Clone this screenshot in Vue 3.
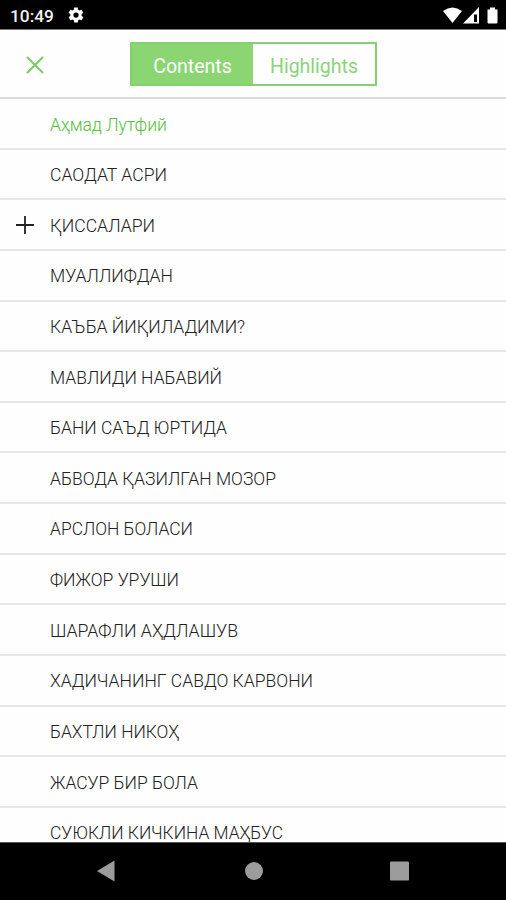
<script setup>
import { ref } from 'vue';

// current tab
const activeTab = ref('contents');

const tabs = [
  { value: 'contents', label: 'Contents' },
  { value: 'highlights', label: 'Highlights' }
];

// table of contents
const chapters = ref([
  { title: 'Аҳмад Лутфий', width: 117, current: true },
  { title: 'САОДАТ АСРИ', width: 117 },
  { title: 'ҚИССАЛАРИ', width: 105, expandable: true },
  { title: 'МУАЛЛИФДАН', width: 123 },
  { title: 'КАЪБА ЙИҚИЛАДИМИ?', width: 195 },
  { title: 'МАВЛИДИ НАБАВИЙ', width: 172 },
  { title: 'БАНИ САЪД ЮРТИДА', width: 177 },
  { title: 'АБВОДА ҚАЗИЛГАН МОЗОР', width: 226 },
  { title: 'АРСЛОН БОЛАСИ', width: 143 },
  { title: 'ФИЖОР УРУШИ', width: 129 },
  { title: 'ШАРАФЛИ АҲДЛАШУВ', width: 188 },
  { title: 'ХАДИЧАНИНГ САВДО КАРВОНИ', width: 263 },
  { title: 'БАХТЛИ НИКОҲ', width: 129 },
  { title: 'ЖАСУР БИР БОЛА', width: 148 },
  { title: 'СУЮКЛИ КИЧКИНА МАҲБУС', width: 233 }
]);
</script>

<template>
  <div class="screen">
    <div class="status-bar">
      <span class="clock">10:49</span>
      <svg class="gear" viewBox="0 0 24 24">
        <path fill-rule="evenodd" d="M19.4 13a7.8 7.8 0 0 0 0-2l2.1-1.6c.2-.2.3-.4.1-.7l-2-3.4c-.1-.2-.4-.3-.6-.2l-2.5 1a7.3 7.3 0 0 0-1.7-1l-.4-2.6c0-.3-.2-.5-.5-.5h-4c-.2 0-.4.2-.5.4l-.4 2.7c-.6.2-1.2.6-1.7 1l-2.4-1c-.2-.1-.5 0-.6.2l-2 3.4c-.1.3-.1.5.1.7L4.5 11a7.8 7.8 0 0 0 0 2l-2.1 1.6c-.2.2-.3.4-.1.7l2 3.4c.1.2.4.3.6.2l2.5-1c.5.4 1.1.7 1.7 1l.4 2.6c0 .3.2.5.5.5h4c.2 0 .4-.2.5-.5l.4-2.6c.6-.3 1.2-.6 1.7-1l2.5 1c.2.1.5 0 .6-.2l2-3.4c.1-.3.1-.5-.1-.7zM12 15.5a3.5 3.5 0 1 1 0-7 3.5 3.5 0 0 1 0 7z" />
      </svg>
      <svg class="signals" viewBox="0 0 56 20">
        <path d="M0 5Q9.5-2 19 5L9.5 17z" />
        <path fill-rule="evenodd" d="M20 17.5L36 1v16.5zM31 8.5v7.5h3v-7.5z" />
        <path d="M44.5 3.5h2.5v-2h5v2h2.5v13q0 1-1 1h-8q-1 0-1-1z" />
      </svg>
    </div>

    <div class="header">
      <svg class="close" viewBox="0 0 18 18">
        <path d="M1 1l16 16M17 1L1 17" />
      </svg>
      <div class="tabs">
        <button
          v-for="tab in tabs"
          :key="tab.value"
          class="tab"
          :class="[tab.value, { active: activeTab === tab.value }]"
          @click="activeTab = tab.value"
        >{{ tab.label }}</button>
      </div>
    </div>

    <div class="list">
      <div v-for="item in chapters" :key="item.title" class="row" :class="{ current: item.current }">
        <div class="expander">
          <svg v-if="item.expandable" class="plus" viewBox="0 0 18 18">
            <path d="M9 0v18M0 9h18" />
          </svg>
        </div>
        <svg class="title" height="30" :width="item.width + 4">
          <text x="0" y="21.5" :textLength="item.width" lengthAdjust="spacingAndGlyphs">{{ item.title }}</text>
        </svg>
      </div>
    </div>

    <div class="nav-bar">
      <svg viewBox="0 0 18 22"><path d="M17.5.5v21L0 11z" /></svg>
      <svg viewBox="0 0 18 22"><circle cx="9" cy="11" r="9" /></svg>
      <svg viewBox="0 0 20 22"><rect y="1.5" width="19" height="19" rx="1" /></svg>
    </div>
  </div>
</template>

<style>
body {
  margin: 0;
  overflow: hidden;
}
</style>

<style scoped>
.screen {
  display: flex;
  flex-direction: column;
  height: 900px;
  background-color: #fefefe;
  font-family: Roboto, "Noto Sans", sans-serif;
  overflow: hidden;
}

.status-bar {
  display: flex;
  align-items: center;
  flex: none;
  box-sizing: border-box;
  height: 30px;
  padding: 1px 8px 0 10px;
  background-color: #000;
  border-bottom: 1px solid #777;
  color: #f2f2f2;
}

.clock {
  width: 57px;
  padding-top: 2px;
  font-size: 17.3px;
  font-weight: 500;
  line-height: 30px;
}

.gear {
  width: 18px;
  height: 18px;
  fill: #fff;
}

.signals {
  width: 56px;
  height: 20px;
  margin: 1px -1px 0 auto;
  fill: #fff;
}

.header {
  display: flex;
  align-items: center;
  flex: none;
  box-sizing: border-box;
  height: 69px;
  padding-left: 26px;
  border-bottom: 2px solid #dcdcdc;
}

.close {
  width: 18px;
  height: 18px;
  margin-top: 2px;
  margin-right: 86px;
  stroke: #78cc65;
  stroke-width: 2;
}

.tabs {
  display: flex;
  box-sizing: border-box;
  width: 247px;
  height: 44px;
  margin-top: 1px;
  border: 2px solid #84d070;
}

.tab {
  padding: 4px 0 0;
  border: none;
  background: none;
  color: #8bd47a;
  font-family: inherit;
  font-size: 19.5px;
  cursor: pointer;
}

.tab.contents {
  width: 121px;
}

.tab.highlights {
  width: 122px;
}

.tab.active {
  background-color: #8bd573;
  color: #fff;
}

.list {
  flex: 1;
  min-height: 0;
  overflow: hidden;
}

.row {
  display: flex;
  align-items: center;
  box-sizing: border-box;
  height: 50.65px;
  border-bottom: 2px solid #e7e7e7;
}

.expander {
  display: flex;
  width: 34px;
  padding-left: 16px;
}

.plus {
  width: 18px;
  height: 18px;
  stroke: #222;
  stroke-width: 1.8;
}

.title {
  overflow: visible;
}

.title text {
  fill: #222;
  font-size: 17.5px;
  font-weight: 300;
}

.current .title {
  margin-top: 2px;
}

.current .title text {
  fill: #54c23a;
}

.nav-bar {
  display: flex;
  align-items: center;
  flex: none;
  box-sizing: border-box;
  height: 58px;
  padding: 0 0 2px 97px;
  gap: 130px;
  background-color: #000;
  border-top: 1px solid #555;
}

.nav-bar svg {
  width: 18px;
  height: 22px;
  fill: #9c9c9c;
}

.nav-bar svg:last-child {
  width: 20px;
  margin-left: -3px;
}
</style>
